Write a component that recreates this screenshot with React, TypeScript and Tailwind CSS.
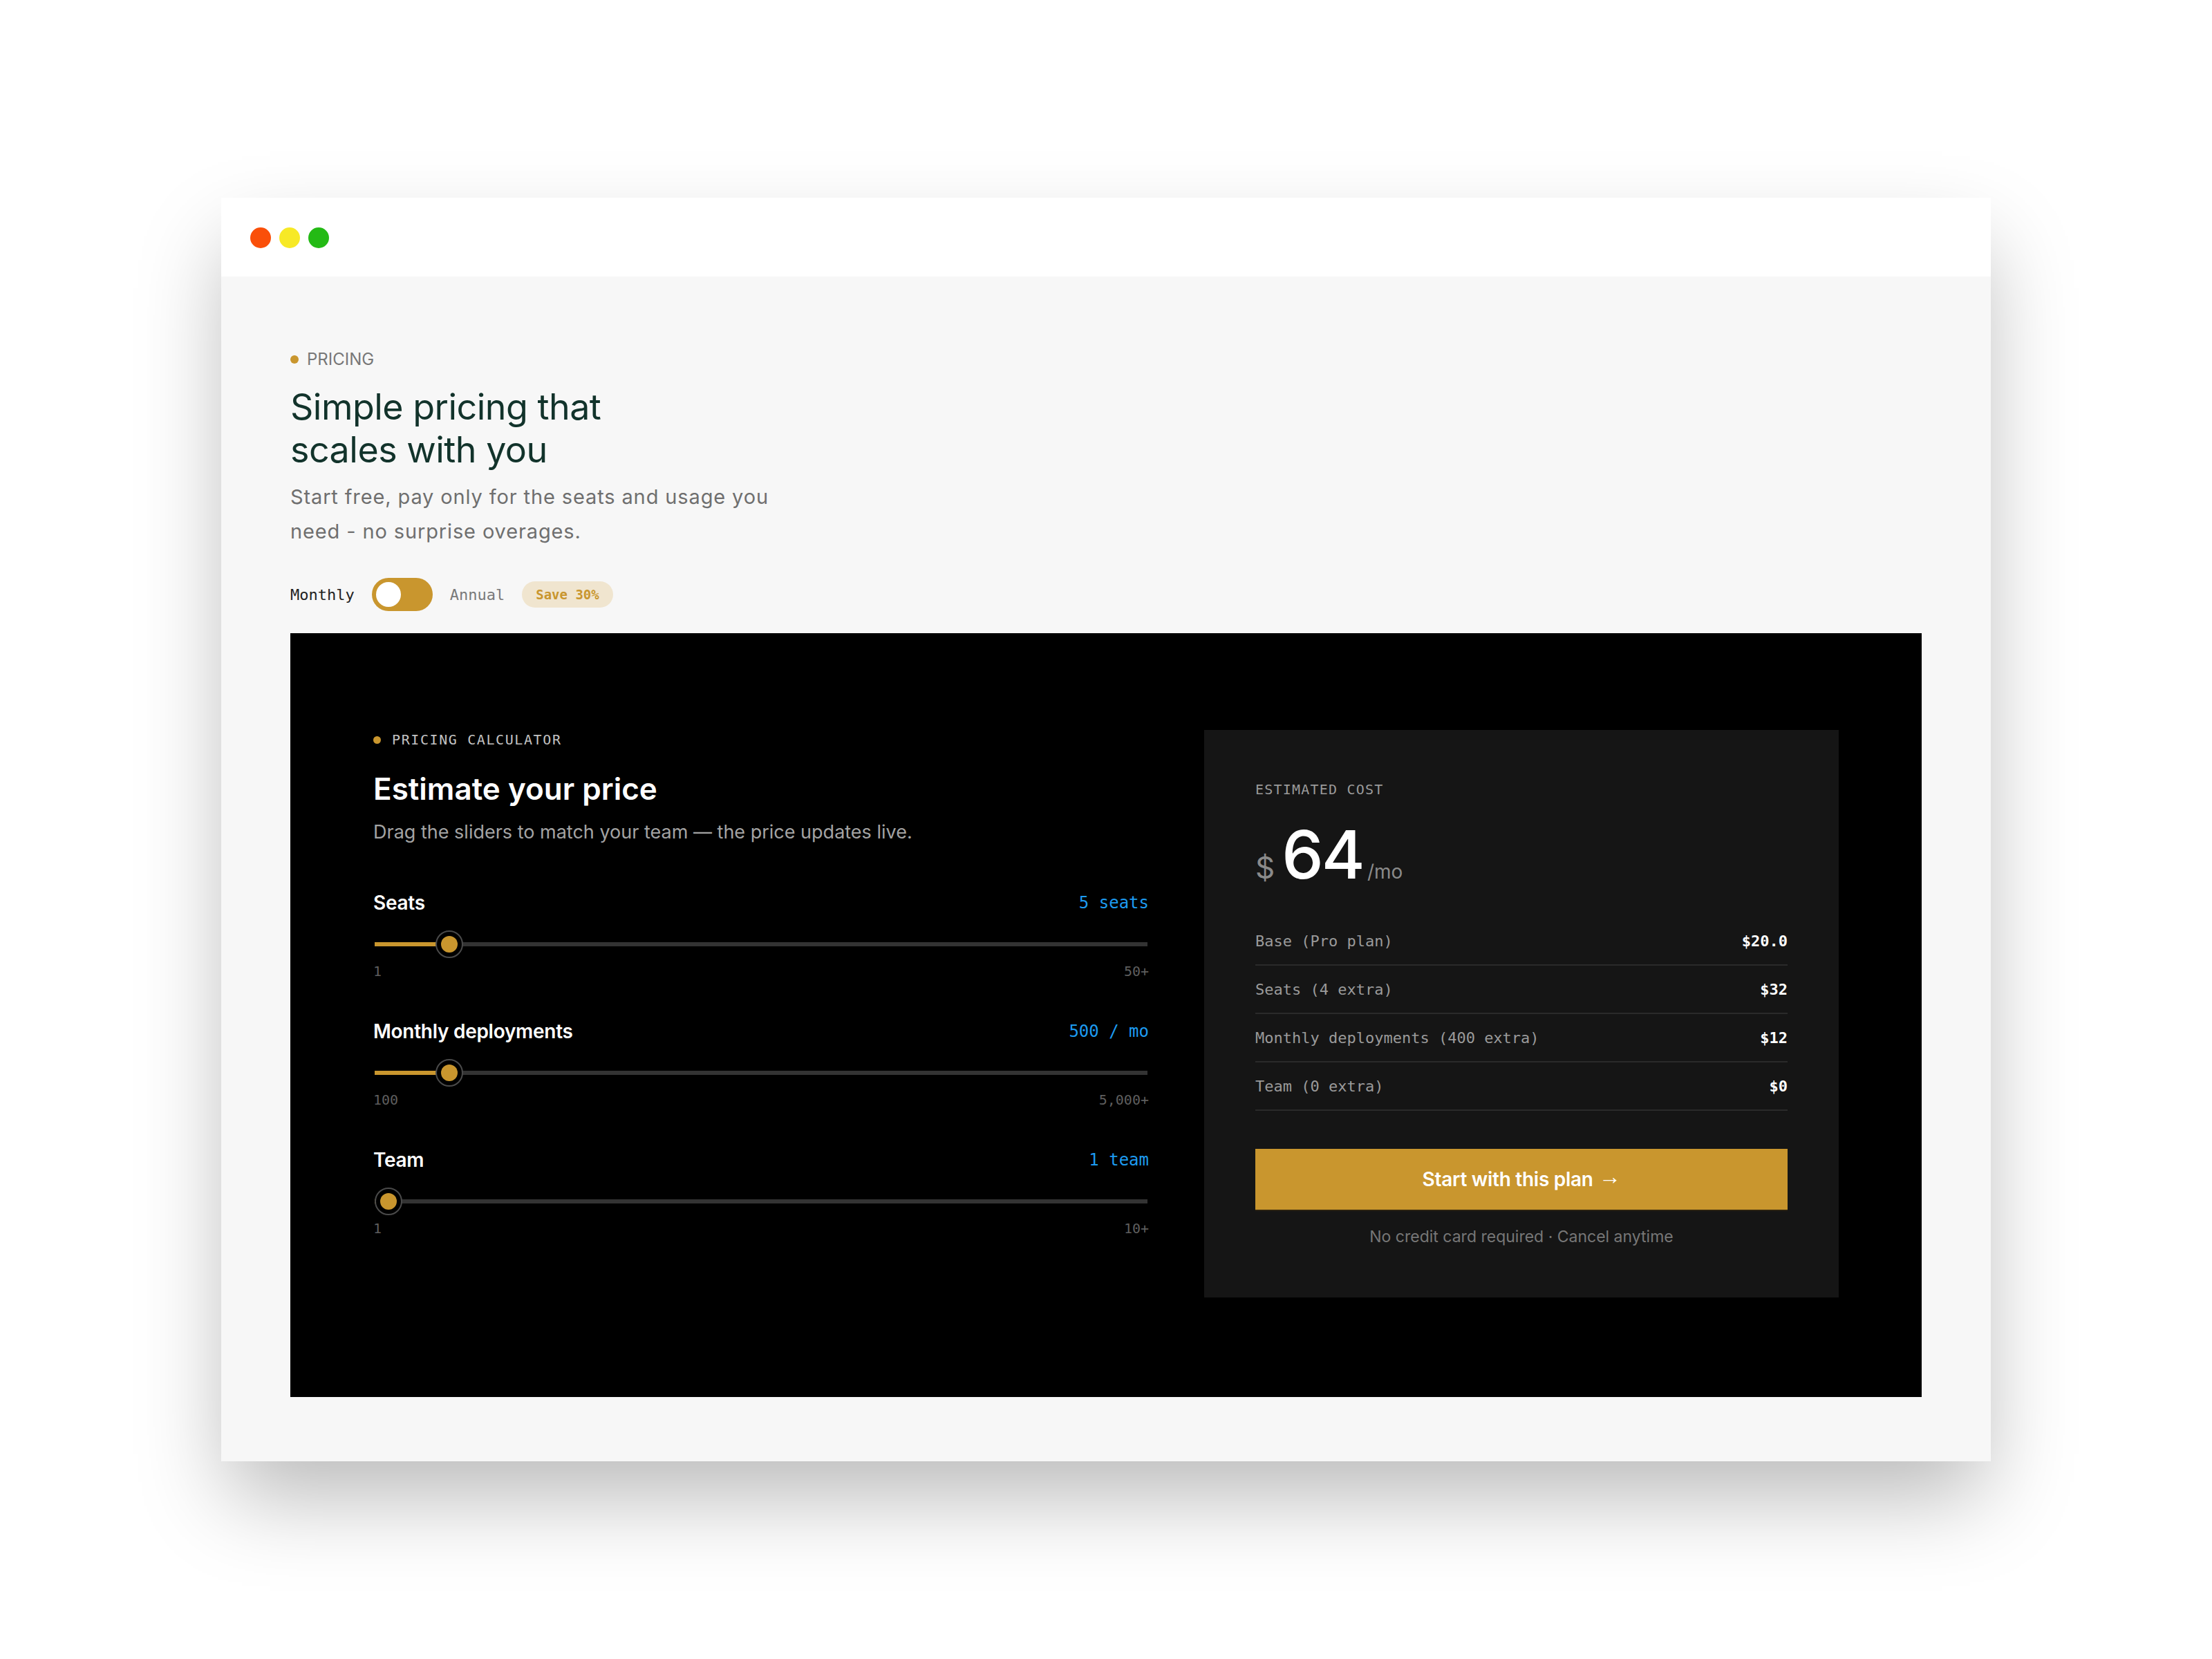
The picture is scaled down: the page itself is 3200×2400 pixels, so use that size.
import React from "react";

const SANS = "font-['Inter',sans-serif]";
const MONO = "font-['DejaVu_Sans_Mono',monospace]";

type SliderProps = {
  label: string;
  value: number;
  min: number;
  max: number;
  display: string;
  minLabel: string;
  maxLabel: string;
};

// slider drawn by hand so the thumb sits where a native range thumb would
function PriceSlider({ label, value, min, max, display, minLabel, maxLabel }: SliderProps) {
  const frac = (value - min) / (max - min);
  return (
    <div className="flex flex-col">
      <div className="flex h-[36px] items-center justify-between">
        <span className="text-[28px] font-semibold tracking-[-0.01em] text-white">{label}</span>
        <span className={`${MONO} text-[24px] text-[#1d9bf0]`}>{display}</span>
      </div>
      <div className="relative mx-[2px] mt-[22px] h-[40px]">
        <div className="absolute left-0 right-0 top-[17px] h-[6px] bg-[#333333]" />
        <div
          className="absolute left-0 top-[17px] h-[6px] bg-[#c9962e]"
          style={{ width: `calc(20px + ${frac} * (100% - 40px))` }}
        />
        <div
          className="absolute top-0 flex h-[40px] w-[40px] items-center justify-center rounded-full border-2 border-[#4a4a4a] bg-black"
          style={{ left: `calc(${frac} * (100% - 40px))` }}
        >
          <div className="h-[24px] w-[24px] rounded-full bg-[#c9962e]" />
        </div>
      </div>
      <div className={`${MONO} mt-[7px] flex justify-between text-[20px] leading-[24px] text-[#5e5e5e]`}>
        <span>{minLabel}</span>
        <span>{maxLabel}</span>
      </div>
    </div>
  );
}

const rows = [
  { label: "Base (Pro plan)", amount: "$20.0" },
  { label: "Seats (4 extra)", amount: "$32" },
  { label: "Monthly deployments (400 extra)", amount: "$12" },
  { label: "Team (0 extra)", amount: "$0" },
];

export default function App() {
  return (
    <div className={`${SANS} flex min-h-[2400px] justify-center bg-white pt-[286px]`}>
      <div className="flex h-fit w-[2560px] flex-col bg-[#f7f7f7] shadow-[0_60px_120px_-10px_rgba(0,0,0,0.28)]">
        {/* title bar */}
        <div className="flex h-[114px] items-center gap-[12px] bg-white pl-[42px] pt-[2px]">
          <span className="h-[30px] w-[30px] rounded-full bg-[#fa4f09]" />
          <span className="h-[30px] w-[30px] rounded-full bg-[#f7e926]" />
          <span className="h-[30px] w-[30px] rounded-full bg-[#24ba15]" />
        </div>

        <div className="flex flex-col px-[100px] pb-[93px] pt-[104px]">
          <div className="flex h-[32px] items-center gap-[12px] text-[24px] uppercase text-[#777777]">
            <span className="h-[12px] w-[12px] rounded-full bg-[#c9962e]" />
            Pricing
          </div>
          <h1 className="mt-[22px] max-w-[560px] text-[52px] font-normal leading-[62px] tracking-[-0.01em] text-[#12332b]">
            Simple pricing that scales with you
          </h1>
          <p className="mt-[12px] max-w-[720px] text-[29px] leading-[50px] tracking-[0.03em] text-[#6f6f6f]">
            Start free, pay only for the seats and usage you need - no surprise overages.
          </p>

          <div className={`${MONO} mt-[42px] flex items-center gap-[25px] text-[22px]`}>
            <span className="text-[#222222]">Monthly</span>
            <div className="flex h-[48px] w-[88px] items-center rounded-full bg-[#c9962e] pl-[6px]">
              <div className="h-[36px] w-[36px] rounded-full bg-white" />
            </div>
            <span className="text-[#7a7a7a]">Annual</span>
            <span className="flex h-[38px] items-center rounded-full bg-[#f0e5cf] px-[20px] text-[19px] font-semibold text-[#c9962e]">
              Save 30%
            </span>
          </div>

          {/* calculator */}
          <div className="mt-[32px] grid grid-cols-[1fr_918px] items-start gap-[80px] bg-black px-[120px] pb-[144px] pt-[140px]">
            <div className="flex flex-col">
              <div className={`${MONO} flex h-[28px] items-center gap-[16px] text-[20px] uppercase tracking-[0.08em] text-[#c2c2c2]`}>
                <span className="h-[11px] w-[11px] rounded-full bg-[#c9962e]" />
                Pricing calculator
              </div>
              <h2 className="mt-[31px] text-[44px] font-semibold leading-[52px] text-white">
                Estimate your price
              </h2>
              <p className="mt-[17px] text-[27px] leading-[40px] text-[#a3a3a3]">
                Drag the sliders to match your team — the price updates live.
              </p>

              <div className="mt-[64px] flex flex-col gap-[57px]">
                <PriceSlider label="Seats" value={5} min={1} max={50} display="5 seats" minLabel="1" maxLabel="50+" />
                <PriceSlider
                  label="Monthly deployments"
                  value={500}
                  min={100}
                  max={5000}
                  display="500 / mo"
                  minLabel="100"
                  maxLabel="5,000+"
                />
                <PriceSlider label="Team" value={1} min={1} max={10} display="1 team" minLabel="1" maxLabel="10+" />
              </div>
            </div>

            <div className="flex flex-col bg-[#151515] p-[74px]">
              <div className={`${MONO} text-[20px] uppercase leading-[24px] tracking-[0.06em] text-[#9a9a9a]`}>
                Estimated cost
              </div>
              <div className="mt-[34px] flex items-baseline">
                <span className="text-[44px] leading-none text-[#8a8a8a]">$</span>
                <span className="ml-[10px] text-[96px] font-medium leading-[96px] tracking-[-0.03em] text-white">64</span>
                <span className="ml-[6px] text-[28px] leading-none text-[#8a8a8a]">/mo</span>
              </div>

              <div className="mt-[43px] flex flex-col">
                {rows.map((r) => (
                  <div
                    key={r.label}
                    className={`${MONO} flex h-[70px] items-center justify-between border-b-2 border-[#2a2a2a] text-[22px]`}
                  >
                    <span className="text-[#9a9a9a]">{r.label}</span>
                    <span className="font-semibold text-white">{r.amount}</span>
                  </div>
                ))}
              </div>

              <button className="mt-[55px] flex h-[90px] items-center justify-center gap-[8px] border-b-2 border-[#2a2110] bg-[#c9962e] text-[28px] font-semibold tracking-[-0.01em] text-white">
                Start with this plan
                <span className="-translate-y-[4px] font-['Liberation_Sans',sans-serif] text-[32px] font-normal leading-none">
                  →
                </span>
              </button>
              <p className="mt-[23px] text-center text-[23px] leading-[28px] text-[#777777]">
                No credit card required · Cancel anytime
              </p>
            </div>
          </div>
        </div>
      </div>
    </div>
  );
}
